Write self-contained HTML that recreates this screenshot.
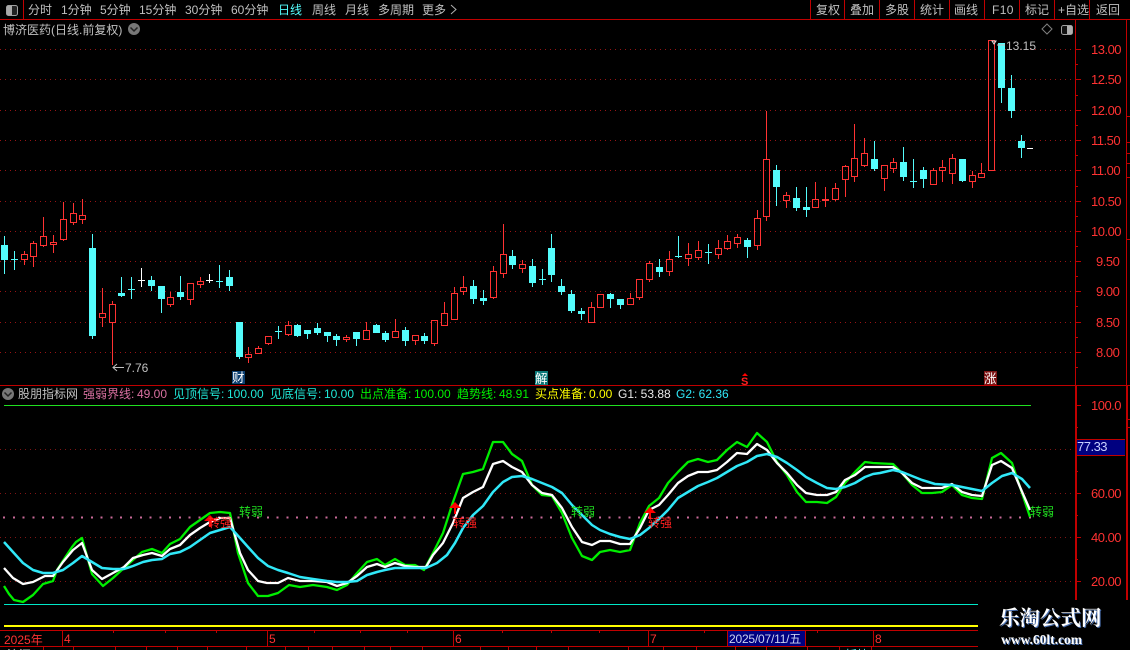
<!DOCTYPE html>
<html lang="zh">
<head>
<meta charset="utf-8">
<title>博济医药</title>
<style>
html,body{margin:0;padding:0;background:#000;width:1130px;height:650px;overflow:hidden}
svg{position:absolute;left:0;top:0;display:block}
text{font-family:"Liberation Sans","Noto Sans CJK SC",sans-serif;font-size:12px}
.t{fill:#c0c0c0}
.a{fill:#ff3232;font-size:13px;letter-spacing:-.5px}
.wm{position:absolute;color:#fff;white-space:nowrap;font-weight:bold;font-family:"Liberation Serif","Noto Serif CJK SC",serif}
</style>
</head>
<body>
<svg width="1130" height="650" viewBox="0 0 1130 650" xmlns="http://www.w3.org/2000/svg">
<rect width="1130" height="650" fill="#000"/>

<!-- grids -->
<path d="M0 49.5H1075M0 79.5H1075M0 110.5H1075M0 140.5H1075M0 170.5H1075M0 201.5H1075M0 231.5H1075M0 261.5H1075M0 291.5H1075M0 322.5H1075M0 352.5H1075" stroke="#961414" stroke-width="1" stroke-dasharray="1 4" fill="none" shape-rendering="crispEdges"/>
<path d="M0 449.5H1075M0 493.5H1075M0 537.5H1075M0 581.5H1075" stroke="#801414" stroke-width="1" stroke-dasharray="1 4" fill="none" shape-rendering="crispEdges"/>

<!-- frame -->
<g shape-rendering="crispEdges" fill="none" stroke="#c00000" stroke-width="1">
<path d="M0 19.5H1130M0 385.5H1130"/>
<path d="M23.5 0V19M810.5 0V19M844.5 0V19M879.5 0V19M914.5 0V19M949.5 0V19M984.5 0V19M1019.5 0V19M1054.5 0V19M1089.5 0V19"/>
<path d="M1075.5 20V385M1126.5 20V385"/>
<path d="M1075 49.5h6M1075 79.5h6M1075 110.5h6M1075 140.5h6M1075 170.5h6M1075 201.5h6M1075 231.5h6M1075 261.5h6M1075 291.5h6M1075 322.5h6M1075 352.5h6"/>
<path d="M1075 64.5h3M1075 95.5h3M1075 125.5h3M1075 155.5h3M1075 186.5h3M1075 216.5h3M1075 246.5h3M1075 276.5h3M1075 306.5h3M1075 337.5h3M1075 367.5h3"/>
<path d="M1126 116.5h4M1126 142.5h4M1126 153.5h4M1126 163.5h4M1126 177.5h4M1126 239.5h4M1126 419.5h4M1126 427.5h4"/>
<path d="M1075 405.5h6M1075 449.5h6M1075 493.5h6M1075 537.5h6M1075 581.5h6M1075 427.5h3M1075 471.5h3M1075 515.5h3M1075 559.5h3"/>
</g>
<rect x="1075" y="386" width="2" height="214" fill="#c00000"/>
<rect x="1126" y="386" width="2" height="214" fill="#c00000"/>

<!-- top bar -->
<rect x="6.5" y="5.5" width="11" height="10" rx="2" fill="#222" stroke="#a0a0a0"/>
<rect x="7" y="6" width="5" height="9" fill="#a8a8a8"/>
<text class="t" x="28" y="14">分时</text>
<text class="t" x="61" y="14">1分钟</text>
<text class="t" x="100" y="14">5分钟</text>
<text class="t" x="139" y="14">15分钟</text>
<text class="t" x="185" y="14">30分钟</text>
<text class="t" x="231" y="14">60分钟</text>
<text x="278" y="14" fill="#54fcfc">日线</text>
<text class="t" x="312" y="14">周线</text>
<text class="t" x="345" y="14">月线</text>
<text class="t" x="378" y="14">多周期</text>
<text class="t" x="422" y="14">更多</text>
<path d="M451 5l5 4.5-5 4.5" fill="none" stroke="#b0b0b0"/>
<text class="t" x="816" y="14">复权</text>
<text class="t" x="850" y="14">叠加</text>
<text class="t" x="885" y="14">多股</text>
<text class="t" x="920" y="14">统计</text>
<text class="t" x="954" y="14">画线</text>
<text class="t" x="992" y="14" style="letter-spacing:.4px">F10</text>
<text class="t" x="1025" y="14">标记</text>
<text class="t" x="1058" y="14">+自选</text>
<text class="t" x="1096" y="14">返回</text>

<!-- header row -->
<text class="t" x="3" y="34">博济医药(日线.前复权)</text>
<circle cx="134" cy="29" r="6" fill="#777"/>
<path d="M130.5 27.5l3.5 3.5 3.5-3.5" stroke="#222" stroke-width="1.5" fill="none"/>
<path d="M1047 24l5 5-5 5-5-5z" fill="none" stroke="#808080"/>
<rect x="1061.5" y="25.5" width="11" height="9" rx="2" fill="#111" stroke="#a0a0a0"/>
<rect x="1067" y="26" width="5" height="8" fill="#b0b0b0"/>

<!-- candles: red wicks -->
<path shape-rendering="crispEdges" fill="none" stroke="#ff3232" stroke-width="1" d="M24.5 251V254M24.5 260V265M33.5 241V243M33.5 257V267M43.5 217V236M43.5 246V247M53.5 235V242M53.5 245V253M63.5 202V219M63.5 240V241M73.5 203V213M73.5 223V225M82.5 199V215M82.5 220V224M102.5 288V313M102.5 318V327M112.5 301V304M112.5 323V365M170.5 292V297M170.5 305V307M190.5 300V305M200.5 277V281M200.5 285V288M248.5 347V354M248.5 358V363M258.5 346V348M268.5 344V345M288.5 321V325M288.5 335V336M346.5 335V337M346.5 340V342M366.5 322V330M395.5 319V331M415.5 341V345M434.5 344V346M444.5 302V313M454.5 287V293M463.5 276V287M463.5 292V295M493.5 266V271M493.5 298V299M503.5 224V254M503.5 274V278M522.5 260V264M522.5 269V273M591.5 302V307M630.5 293V298M639.5 298V300M649.5 261V263M649.5 280V282M669.5 251V259M669.5 272V276M688.5 243V254M688.5 259V266M698.5 241V250M698.5 258V260M718.5 240V248M718.5 255V259M727.5 235V241M727.5 249V250M737.5 234V237M737.5 244V248M757.5 210V218M757.5 246V250M766.5 111V159M766.5 217V221M786.5 192V195M786.5 201V208M815.5 182V199M825.5 187V199M825.5 201V207M835.5 183V188M835.5 200V201M845.5 165V166M845.5 180V197M854.5 124V158M854.5 177V182M864.5 138V153M864.5 166V167M884.5 179V191M893.5 158V162M893.5 169V173M933.5 168V170M942.5 160V167M942.5 171V182M952.5 154V158M952.5 174V184M972.5 171V175M972.5 182V188M981.5 163V173"/>
<!-- red bodies -->
<path shape-rendering="crispEdges" fill="none" stroke="#ff3232" stroke-width="1" d="M21.5 254.5h6v5h-6zM30.5 243.5h6v13h-6zM40.5 236.5h6v9h-6zM50.5 242.5h6v2h-6zM60.5 219.5h6v20h-6zM70.5 213.5h6v9h-6zM79.5 215.5h6v4h-6zM99.5 313.5h6v4h-6zM109.5 304.5h6v18h-6zM167.5 297.5h6v7h-6zM187.5 283.5h6v16h-6zM197.5 281.5h6v3h-6zM245.5 354.5h6v3h-6zM255.5 348.5h6v5h-6zM265.5 336.5h6v7h-6zM285.5 325.5h6v9h-6zM343.5 337.5h6v2h-6zM363.5 330.5h6v9h-6zM392.5 331.5h6v6h-6zM412.5 335.5h6v5h-6zM431.5 320.5h6v23h-6zM441.5 313.5h6v12h-6zM451.5 293.5h6v26h-6zM460.5 287.5h6v4h-6zM490.5 271.5h6v26h-6zM500.5 254.5h6v19h-6zM519.5 264.5h6v4h-6zM588.5 307.5h6v15h-6zM597.5 294.5h6v13h-6zM627.5 298.5h6v6h-6zM636.5 279.5h6v18h-6zM646.5 263.5h6v16h-6zM666.5 259.5h6v12h-6zM685.5 254.5h6v4h-6zM695.5 250.5h6v7h-6zM715.5 248.5h6v6h-6zM724.5 241.5h6v7h-6zM734.5 237.5h6v6h-6zM754.5 218.5h6v27h-6zM763.5 159.5h6v57h-6zM783.5 195.5h6v5h-6zM812.5 199.5h6v8h-6zM822.5 199.5h6v1h-6zM832.5 188.5h6v11h-6zM842.5 166.5h6v13h-6zM851.5 158.5h6v18h-6zM861.5 153.5h6v12h-6zM881.5 165.5h6v13h-6zM890.5 162.5h6v6h-6zM930.5 170.5h6v14h-6zM939.5 167.5h6v3h-6zM949.5 158.5h6v15h-6zM969.5 175.5h6v6h-6zM978.5 173.5h6v4h-6zM988.5 40.5h6v130h-6z"/>
<!-- cyan wicks + dojis -->
<path shape-rendering="crispEdges" fill="none" stroke="#54fcfc" stroke-width="1" d="M4.5 236V274M14.5 251V270M11 259.5h7M92.5 234V339M121.5 277V297M131.5 277V299M128 289.5h7M151.5 276V291M161.5 286V313M180.5 276V300M219.5 265V288M216 281.5h7M229.5 270V291M239.5 322V359M278.5 326V339M275 331.5h7M297.5 324V337M307.5 330V339M317.5 323V335M327.5 332V342M336.5 334V346M356.5 332V346M376.5 324V333M385.5 331V342M405.5 327V346M424.5 333V344M473.5 280V304M483.5 290V305M512.5 250V269M532.5 259V287M542.5 269V285M539 279.5h7M551.5 234V282M561.5 279V295M571.5 290V313M581.5 308V320M610.5 293V308M620.5 299V309M659.5 259V277M678.5 236V258M675 256.5h7M708.5 244V264M705 252.5h7M747.5 238V258M776.5 165V206M796.5 187V211M806.5 187V217M874.5 141V171M903.5 147V181M913.5 159V188M910 181.5h7M923.5 167V188M962.5 159V182M1001.5 43V103M1011.5 75V118M1021.5 135V158"/>
<!-- cyan bodies -->
<path fill="#54fcfc" shape-rendering="crispEdges" d="M1 245h7v15h-7zM89 248h7v88h-7zM118 293h7v3h-7zM148 280h7v6h-7zM158 286h7v13h-7zM177 292h7v5h-7zM226 277h7v9h-7zM236 322h7v35h-7zM294 325h7v11h-7zM304 330h7v4h-7zM314 328h7v5h-7zM324 332h7v4h-7zM333 336h7v4h-7zM353 332h7v7h-7zM373 325h7v8h-7zM382 333h7v7h-7zM402 330h7v11h-7zM421 336h7v5h-7zM470 286h7v13h-7zM480 298h7v3h-7zM509 256h7v9h-7zM529 266h7v17h-7zM548 248h7v27h-7zM558 286h7v6h-7zM568 294h7v17h-7zM578 311h7v3h-7zM607 294h7v5h-7zM617 299h7v6h-7zM656 267h7v5h-7zM744 240h7v7h-7zM773 170h7v17h-7zM793 198h7v10h-7zM803 207h7v3h-7zM871 159h7v10h-7zM900 162h7v15h-7zM920 170h7v9h-7zM959 159h7v22h-7zM998 43h7v45h-7zM1008 88h7v23h-7zM1018 141h7v7h-7z"/>
<!-- white dojis -->
<path shape-rendering="crispEdges" fill="none" stroke="#fff" d="M141.5 268V287M138 280.5h7M209.5 274V283M206 280.5h7M1027 148.5h6"/>

<!-- hi / lo labels -->
<path d="M124 367.5H113M117 364l-4 3.5 4 3.5" fill="none" stroke="#c0c0c0"/>
<text class="t" x="125" y="372">7.76</text>
<path d="M992 41h4l-2 3z" fill="none" stroke="#ddd"/>
<path d="M997 45h8" stroke="#c0c0c0"/>
<text class="t" x="1006" y="50">13.15</text>

<!-- event marks -->
<rect x="232" y="371" width="13" height="13" fill="#0c3f70"/>
<text x="232" y="382" fill="#fff" style="font-size:12.5px">财</text>
<rect x="535" y="371" width="13" height="14" fill="#0b7878"/>
<text x="535" y="383" fill="#fff" style="font-size:12.5px">解</text>
<path d="M745 373l3 3h-6z" fill="#f00"/>
<text x="741" y="385" fill="#ff2020" style="font-size:11px;font-weight:bold">S</text>
<rect x="984" y="371" width="13" height="14" fill="#7c1414"/>
<text x="984" y="383" fill="#fff" style="font-size:12.5px">涨</text>

<!-- price labels -->
<text class="a" x="1091" y="54">13.00</text>
<text class="a" x="1091" y="84">12.50</text>
<text class="a" x="1091" y="115">12.00</text>
<text class="a" x="1091" y="145">11.50</text>
<text class="a" x="1091" y="175">11.00</text>
<text class="a" x="1091" y="206">10.50</text>
<text class="a" x="1091" y="236">10.00</text>
<text class="a" x="1096" y="266">9.50</text>
<text class="a" x="1096" y="296">9.00</text>
<text class="a" x="1096" y="327">8.50</text>
<text class="a" x="1096" y="357">8.00</text>

<!-- indicator axis -->
<text class="a" x="1091" y="410">100.0</text>
<text class="a" x="1091" y="498">60.00</text>
<text class="a" x="1091" y="542">40.00</text>
<text class="a" x="1091" y="586">20.00</text>
<rect x="1077" y="439" width="48" height="16" fill="#000080"/>
<path d="M1077 439.5h48M1077 455.5h48" stroke="#c00000" shape-rendering="crispEdges"/>
<text x="1077" y="451" fill="#c8d0ff" style="font-size:13px;letter-spacing:-.5px">77.33</text>

<!-- legend -->
<circle cx="8" cy="394" r="6" fill="#777"/>
<path d="M4.5 392.5l3.5 3.5 3.5-3.5" stroke="#222" stroke-width="1.5" fill="none"/>
<text class="t" x="18" y="398">股朋指标网</text>
<text x="83" y="398" fill="#d870a0">强弱界线:</text><text x="137" y="398" fill="#d870a0">49.00</text>
<text x="173" y="398" fill="#20e8d8">见顶信号:</text><text x="227" y="398" fill="#20e8d8">100.00</text>
<text x="270" y="398" fill="#20e8d8">见底信号:</text><text x="324" y="398" fill="#20e8d8">10.00</text>
<text x="360" y="398" fill="#00f000">出点准备:</text><text x="414" y="398" fill="#00f000">100.00</text>
<text x="457" y="398" fill="#00f000">趋势线:</text><text x="499" y="398" fill="#00f000">48.91</text>
<text x="535" y="398" fill="#ffff00">买点准备:</text><text x="589" y="398" fill="#ffff00">0.00</text>
<text x="618" y="398" fill="#e8e8e8">G1: 53.88</text>
<text x="676" y="398" fill="#30e8f8">G2: 62.36</text>

<!-- horizontal indicator lines -->
<path d="M4 405.5H1031" stroke="#20e020" shape-rendering="crispEdges"/>
<path d="M3 517.5H1031" stroke="#c86a98" stroke-width="2" stroke-dasharray="2 7.77" fill="none" shape-rendering="crispEdges"/>
<path d="M4 604.5H978" stroke="#00e8c8" shape-rendering="crispEdges"/>
<rect x="4" y="625" width="974" height="2" fill="#ffff00"/>

<!-- curves -->
<g fill="none" stroke-width="2.3" stroke-linejoin="round">
<polyline stroke="#00ee00" points="4,586 9,594 14,600 23,602 33,595 43,584 53,581 57,570 72,547 76,542 82,538 92,574 103,586 113,578 124,568 133,560 142,552 152,549 162,553 170,544 180,539 190,527 200,520 210,513 220,512 230,513 238,553 248,583 258,596 268,596 278,593 289,585 300,587 313,585 327,587 337,590 347,585 357,573 367,562 377,559 385,565 395,559 405,565 415,565 424,570 433,553 443,533 453,502 463,474 473,472 483,469 493,442 503,442 512,454 522,461 532,485 542,495 552,496 562,513 572,538 582,556 592,560 600,552 610,550 620,552 630,550 640,523 649,506 659,498 668,483 678,472 688,462 698,459 708,462 717,460 727,450 737,442 747,447 757,433 767,442 777,462 787,475 797,492 806,502 817,502 827,503 836,497 845,483 855,472 865,462 873,463 893,464 902,473 912,485 922,493 932,493 942,492 952,485 962,495 972,498 982,499 992,458 1001,453 1012,463 1020,487 1030,517"/>
<polyline stroke="#ffffff" points="4,568 13,578 23,584 33,582 45,576 53,576 63,562 73,550 82,543 92,570 102,579 113,573 124,567 133,558 143,555 152,553 162,556 170,549 180,545 190,535 200,528 210,522 220,518 230,518 240,553 248,570 258,581 267,583 278,583 288,578 300,581 313,581 327,582 337,586 347,583 357,576 367,567 377,564 385,567 395,563 405,566 415,567 426,567 433,555 443,543 453,523 463,498 473,492 483,487 493,464 503,461 512,467 522,472 532,485 542,493 552,495 562,508 572,527 582,542 592,545 600,541 610,541 620,544 630,544 640,528 649,510 659,505 668,495 678,483 688,476 698,472 708,472 717,470 727,462 737,453 747,454 757,444 767,450 777,463 787,473 797,485 806,493 817,495 827,495 836,492 845,480 855,475 865,467 893,467 902,473 912,483 922,488 942,488 952,484 962,492 972,495 982,496 992,465 1001,461 1012,468 1020,487 1030,510"/>
<polyline stroke="#30e8f8" stroke-width="2.5" points="4,542 13,552 23,563 33,570 43,573 53,573 63,570 73,563 82,556 92,562 102,568 113,569 124,569 133,566 143,562 152,560 162,559 170,554 180,552 190,547 200,540 210,533 220,530 230,527 240,538 248,547 258,558 268,566 278,570 288,573 300,577 313,579 327,581 337,582 347,582 357,581 367,575 377,572 385,570 395,568 415,568 426,568 437,563 447,555 455,543 463,528 473,515 483,506 493,492 503,482 512,477 522,476 532,479 542,483 552,487 562,493 572,505 582,515 592,525 600,530 610,534 620,537 630,539 640,535 649,528 659,519 668,510 678,498 688,492 698,486 708,482 717,478 727,472 737,466 747,462 757,456 767,454 777,457 787,463 797,470 806,477 817,483 827,488 836,489 845,487 855,483 865,477 873,474 880,473 893,470 902,472 912,476 922,480 935,484 952,485 962,487 972,489 982,491 992,483 1002,476 1012,473 1022,479 1030,488"/>
</g>

<!-- signals -->
<path fill="#f00" d="M210 515l6 6h-5v6h-2v-6h-5zM455 502l6 6h-5v6h-2v-6h-5zM650 507l6 6h-5v6h-2v-6h-5z"/>
<text x="208" y="527" fill="#ff2020">转强</text>
<text x="453" y="527" fill="#ff2020">转强</text>
<text x="648" y="527" fill="#ff2020">转强</text>
<text x="239" y="516" fill="#20e020">转弱</text>
<text x="571" y="516" fill="#20e020">转弱</text>
<text x="1030" y="516" fill="#20e020">转弱</text>

<!-- time axis -->
<g shape-rendering="crispEdges" fill="none" stroke="#c00000">
<path d="M0 630.5H978M0 646.5H978"/>
<path d="M62.5 630V646M267.5 630V646M453.5 630V646M648.5 630V646M873.5 630V646"/>
<path d="M113.5 630v3M165.5 630v3M216.5 630v3M314.5 630v3M360.5 630v3M407.5 630v3M502.5 630v3M551.5 630v3M599.5 630v3M704.5 630v3M817.5 630v3"/>
<path d="M43.5 646v4M73.5 646v4M115.5 646v4M146.5 646v4M177.5 646v4M207.5 646v4M246.5 646v4M285.5 646v4M308.5 646v4M332.5 646v4M364.5 646v4M390.5 646v4M422.5 646v4M480.5 646v4M508.5 646v4M536.5 646v4M568.5 646v4M628.5 646v4M663.5 646v4M696.5 646v4M735.5 646v4M766.5 646v4M807.5 646v4M839.5 646v4M871.5 646v4"/>
</g>
<text x="4" y="644" fill="#ff3232">2025年</text>
<text x="64" y="643" fill="#ff3232">4</text>
<text x="269" y="643" fill="#ff3232">5</text>
<text x="455" y="643" fill="#ff3232">6</text>
<text x="650" y="643" fill="#ff3232">7</text>
<text x="875" y="643" fill="#ff3232">8</text>
<rect x="727.5" y="630.5" width="78" height="16" fill="#000080" stroke="#c00000"/>
<text x="729" y="643" fill="#c8d0f0" style="letter-spacing:-.2px">2025/07/11/五</text>
<text x="7" y="659" fill="#c0c0c0">沪深</text>
<text x="845" y="659" fill="#54fcfc">板块</text>

<!-- watermark area -->
<rect x="978" y="600" width="152" height="50" fill="#000"/>
</svg>
<div class="wm" style="left:999px;top:607px;font-size:20.5px;line-height:24px;text-shadow:1px 1px 0 #4a70b0">乐淘公式网</div>
<div class="wm" style="left:1001px;top:632px;font-size:13.5px;line-height:16px;text-shadow:1px 1px 0 #4a70b0">www.60lt.com</div>
</body>
</html>
